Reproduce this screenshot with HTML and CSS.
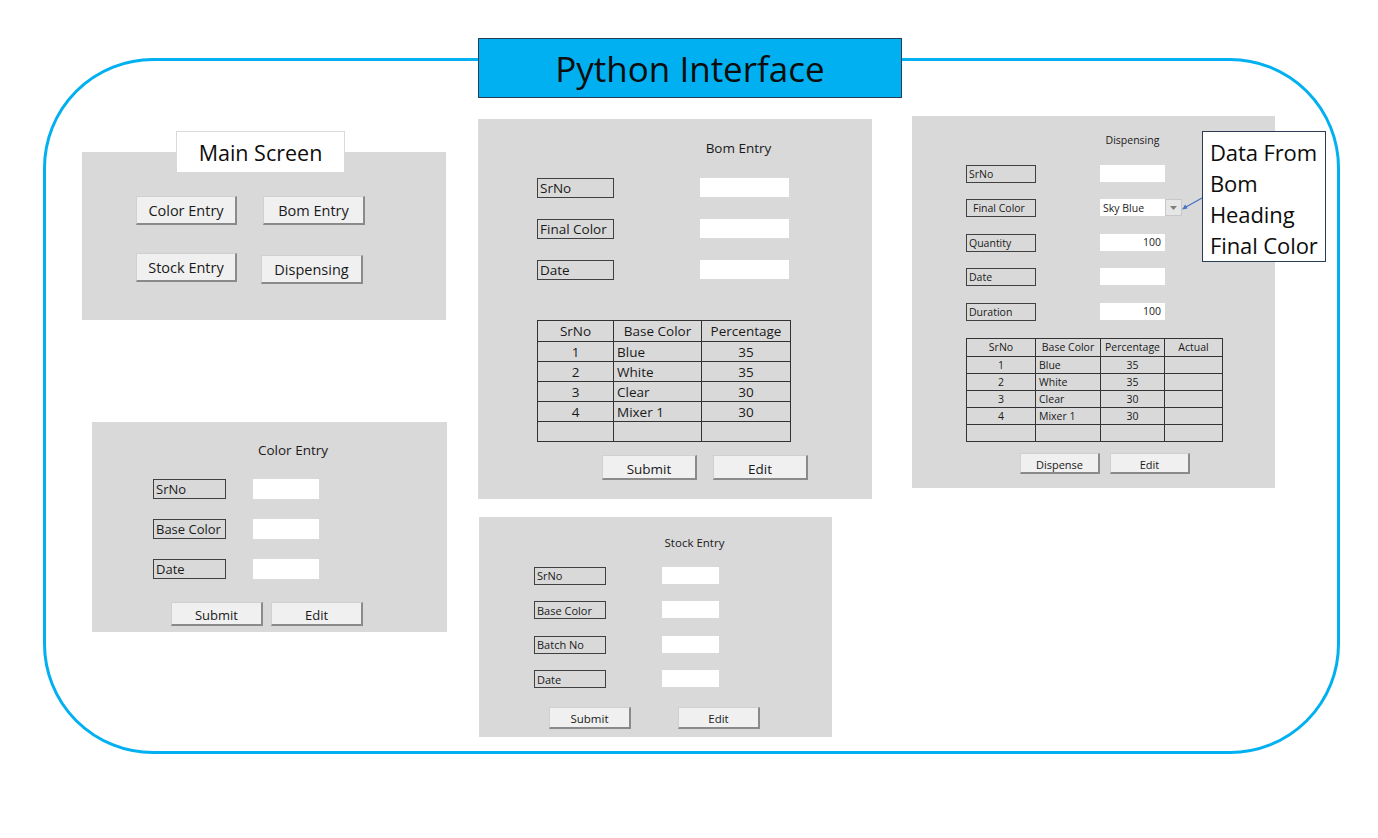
FILE: index.html
```html
<!DOCTYPE html>
<html>
<head>
<meta charset="utf-8">
<link rel="stylesheet" href="styles.css">
</head>
<body>
<div class="canvas">
  <div class="frame"></div>
  <div class="title-box">Python Interface</div>

  <!-- Main Screen -->
  <div class="panel main-panel">
    <div class="main-grid">
      <button class="btn btn-main">Color Entry</button>
      <button class="btn btn-main">Bom Entry</button>
      <button class="btn btn-main">Stock Entry</button>
      <button class="btn btn-main shift">Dispensing</button>
    </div>
  </div>
  <div class="main-label">Main Screen</div>

  <!-- Bom Entry -->
  <div class="panel bom-panel">
    <div class="form bom-form">
      <div class="form-title">Bom Entry</div>
      <div class="lbl">SrNo</div><div class="inp"></div>
      <div class="lbl">Final Color</div><div class="inp"></div>
      <div class="lbl">Date</div><div class="inp"></div>
    </div>
    <table class="tbl bom-tbl">
      <tr><th>SrNo</th><th>Base Color</th><th>Percentage</th></tr>
      <tr><td class="c">1</td><td>Blue</td><td class="c">35</td></tr>
      <tr><td class="c">2</td><td>White</td><td class="c">35</td></tr>
      <tr><td class="c">3</td><td>Clear</td><td class="c">30</td></tr>
      <tr><td class="c">4</td><td>Mixer 1</td><td class="c">30</td></tr>
      <tr><td></td><td></td><td></td></tr>
    </table>
    <div class="btn-row bom-btns">
      <button class="btn">Submit</button>
      <button class="btn">Edit</button>
    </div>
  </div>

  <!-- Dispensing -->
  <div class="panel disp-panel">
    <div class="form disp-form">
      <div class="form-title">Dispensing</div>
      <div class="lbl">SrNo</div><div class="inp"></div>
      <div class="lbl pad">Final Color</div>
      <div class="inp combo"><span>Sky Blue</span><span class="drop"><svg width="7" height="4" viewBox="0 0 7 4"><path d="M0 0H7L3.5 4Z" fill="#7f7f7f"/></svg></span></div>
      <div class="lbl">Quantity</div><div class="inp num">100</div>
      <div class="lbl">Date</div><div class="inp"></div>
      <div class="lbl">Duration</div><div class="inp num">100</div>
    </div>
    <table class="tbl disp-tbl">
      <tr><th>SrNo</th><th>Base Color</th><th>Percentage</th><th>Actual</th></tr>
      <tr><td class="c">1</td><td>Blue</td><td class="c">35</td><td></td></tr>
      <tr><td class="c">2</td><td>White</td><td class="c">35</td><td></td></tr>
      <tr><td class="c">3</td><td>Clear</td><td class="c">30</td><td></td></tr>
      <tr><td class="c">4</td><td>Mixer 1</td><td class="c">30</td><td></td></tr>
      <tr><td></td><td></td><td></td><td></td></tr>
    </table>
    <div class="btn-row disp-btns">
      <button class="btn">Dispense</button>
      <button class="btn">Edit</button>
    </div>
  </div>

  <div class="callout">Data From<br>Bom<br>Heading<br>Final Color</div>
  <svg class="arrow" width="24" height="16" viewBox="0 0 24 16">
    <line x1="22" y1="2" x2="6" y2="11" stroke="#4472c4" stroke-width="1.3"/>
    <path d="M2 13.5L5.2 8.6L7.6 12.6Z" fill="#4472c4"/>
  </svg>

  <!-- Color Entry -->
  <div class="panel color-panel">
    <div class="form color-form">
      <div class="form-title">Color Entry</div>
      <div class="lbl">SrNo</div><div class="inp"></div>
      <div class="lbl">Base Color</div><div class="inp"></div>
      <div class="lbl">Date</div><div class="inp"></div>
    </div>
    <div class="btn-row color-btns">
      <button class="btn">Submit</button>
      <button class="btn">Edit</button>
    </div>
  </div>

  <!-- Stock Entry -->
  <div class="panel stock-panel">
    <div class="form stock-form">
      <div class="form-title">Stock Entry</div>
      <div class="lbl">SrNo</div><div class="inp"></div>
      <div class="lbl">Base Color</div><div class="inp"></div>
      <div class="lbl">Batch No</div><div class="inp"></div>
      <div class="lbl">Date</div><div class="inp"></div>
    </div>
    <div class="btn-row stock-btns">
      <button class="btn">Submit</button>
      <button class="btn">Edit</button>
    </div>
  </div>
</div>
</body>
</html>
```
FILE: styles.css
```css
* { box-sizing: border-box; }
html, body { margin: 0; padding: 0; background: #ffffff; }
body { font-family: "Open Sans", "Liberation Sans", sans-serif; color: #1a1a1a; }

.canvas { position: relative; width: 1378px; height: 838px; overflow: hidden; }

.frame {
  position: absolute; left: 43px; top: 58px; width: 1297px; height: 696px;
  border: 3px solid #00b0f0; border-radius: 110px;
}
.title-box {
  position: absolute; left: 478px; top: 38px; width: 424px; height: 60px;
  background: #00b0f0; border: 1px solid #2b3d55;
  display: flex; align-items: center; justify-content: center;
  font-size: 35px; color: #0d0d0d; letter-spacing: 0;
}

.panel { position: absolute; background: #d9d9d9; display: flex; flex-direction: column; align-items: flex-start; }

/* buttons */
.btn {
  font-family: inherit; color: #1a1a1a; background: #f0f0f0;
  border: 1px solid #d0d0d0; border-right: 2px solid #8a8a8a; border-bottom: 2px solid #8a8a8a;
  padding: 0; margin: 0; display: flex; align-items: center; justify-content: center;
}
.btn-row { display: flex; }

/* main */
.main-panel { left: 82px; top: 152px; width: 364px; height: 168px; padding: 44px 0 0 54px; }
.main-grid { display: grid; grid-template-columns: 101px 102px; column-gap: 26px; row-gap: 28px; }
.btn-main { height: 29px; font-size: 14.5px; }
.shift { position: relative; top: 2px; left: -2px; }
.main-label {
  position: absolute; left: 176px; top: 131px; width: 169px; height: 42px;
  background: #ffffff; border: 1px solid #d9d9d9;
  display: flex; align-items: center; justify-content: center; font-size: 21.5px; color: #0d0d0d;
}

/* forms */
.form { display: grid; align-items: start; }
.form-title { grid-column: 2; display: flex; justify-content: center; white-space: nowrap; }
.lbl {
  grid-column: 1; border: 1px solid #404040; white-space: nowrap; overflow: hidden;
  display: flex; align-items: center; padding-left: 2px;
}
.lbl.pad { padding-left: 6px; }
.inp { grid-column: 2; background: #ffffff; color: #1a1a1a; display: flex; align-items: center; white-space: nowrap; }
.inp.num { justify-content: flex-end; padding-right: 4px; }

.tbl { border-collapse: collapse; table-layout: fixed; }
.tbl th, .tbl td { border: 1px solid #333333; padding: 0 3px; font-weight: normal; text-align: left; white-space: nowrap; overflow: hidden; }
.tbl th, .tbl td.c { text-align: center; }

/* bom */
.bom-panel { left: 478px; top: 119px; width: 394px; height: 380px; padding: 20px 0 0 59px; }
.bom-form { grid-template-columns: 77px 89px; column-gap: 86px; row-gap: 21px; font-size: 13.5px; }
.bom-form .form-title { font-size: 13.5px; height: 18px; align-items: center; padding-right: 12px; }
.bom-form .lbl { height: 20px; }
.bom-form .inp { height: 19px; }
.bom-tbl { margin-top: 40px; width: 253px; font-size: 13.5px; }
.bom-tbl th:nth-child(1) { width: 76px; }
.bom-tbl th:nth-child(2) { width: 88px; text-align: center; }
.bom-tbl th:nth-child(3) { width: 89px; }
.bom-tbl th { height: 21px; }
.bom-tbl td { height: 20px; }
.bom-btns { margin: 13px 0 0 65px; gap: 16px; }
.bom-btns .btn { width: 95px; height: 25px; font-size: 13.5px; padding-top: 3px; }

/* dispensing */
.disp-panel { left: 912px; top: 116px; width: 363px; height: 372px; padding: 16px 0 0 54px; }
.disp-form { grid-template-columns: 70px 65px; column-gap: 64px; row-gap: 16.5px; font-size: 10.5px; }
.disp-form .form-title { font-size: 10.5px; height: 16px; align-items: center; }
.disp-form .lbl { height: 18px; }
.disp-form .inp { height: 17px; }
.combo { position: relative; padding-left: 3px; }
.drop {
  position: absolute; left: 65px; top: 0; width: 17px; height: 17px;
  background: #e6e6e6; border: 1px solid #c8c8c8;
  display: flex; align-items: center; justify-content: center;
}
.disp-tbl { margin-top: 17px; width: 256px; font-size: 10.5px; }
.disp-tbl th:nth-child(1) { width: 69px; }
.disp-tbl th:nth-child(2) { width: 65px; }
.disp-tbl th:nth-child(3) { width: 64px; padding: 0 1px; }
.disp-tbl th:nth-child(4) { width: 58px; }
.disp-tbl th { height: 18px; }
.disp-tbl td { height: 17px; }
.disp-btns { margin: 11px 0 0 54px; gap: 10px; }
.disp-btns .btn { width: 80px; height: 21px; font-size: 11px; padding-top: 3px; }

.callout {
  position: absolute; left: 1202px; top: 131px; width: 124px; height: 131px;
  background: #ffffff; border: 1.5px solid #2b3d55;
  padding: 5px 0 0 7px; font-size: 22px; line-height: 31px; color: #0d0d0d; white-space: nowrap; letter-spacing: -0.1px;
}
.arrow { position: absolute; left: 1180px; top: 196px; }

/* color entry */
.color-panel { left: 92px; top: 422px; width: 355px; height: 210px; padding: 19px 0 0 61px; }
.color-form { grid-template-columns: 73px 66px; column-gap: 27px; row-gap: 20px; font-size: 13px; }
.color-form .form-title { font-size: 13.5px; height: 18px; align-items: center; padding-left: 14px; }
.color-form .lbl { height: 20px; }
.color-form .inp { height: 20px; }
.color-btns { margin: 23px 0 0 18px; gap: 8px; }
.color-btns .btn { width: 92px; height: 24px; font-size: 13px; padding-top: 3px; }

/* stock entry */
.stock-panel { left: 479px; top: 517px; width: 353px; height: 220px; padding: 17px 0 0 55px; }
.stock-form { grid-template-columns: 72px 57px; column-gap: 56px; row-gap: 16.5px; font-size: 11px; }
.stock-form .form-title { font-size: 11.5px; height: 16px; align-items: center; padding-left: 8px; }
.stock-form .lbl { height: 18px; }
.stock-form .inp { height: 17px; }
.stock-btns { margin: 19px 0 0 15px; gap: 47px; }
.stock-btns .btn { width: 82px; height: 22px; font-size: 11.5px; padding-top: 2px; }
```
